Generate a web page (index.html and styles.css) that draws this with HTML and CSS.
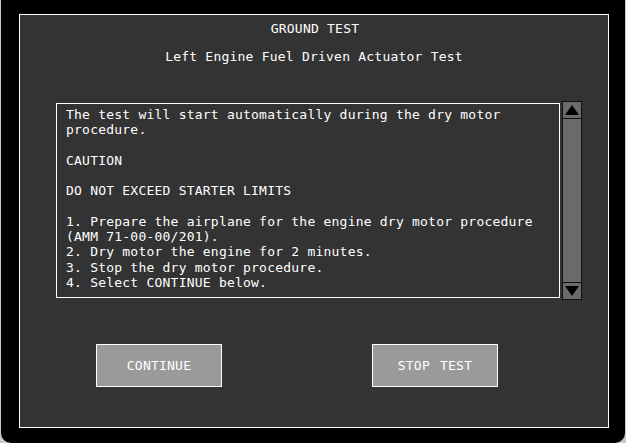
FILE: index.html
```html
<!DOCTYPE html>
<html>
<head>
<meta charset="utf-8">
<link rel="stylesheet" href="styles.css">
</head>
<body>
<div class="frame">
  <div class="panel">
    <div class="title">GROUND TEST</div>
    <div class="subtitle">Left Engine Fuel Driven Actuator Test</div>
    <div class="content-row">
      <div class="textbox">
        <div class="line">The test will start automatically during the dry motor</div>
        <div class="line">procedure.</div>
        <div class="line"></div>
        <div class="line">CAUTION</div>
        <div class="line"></div>
        <div class="line">DO NOT EXCEED STARTER LIMITS</div>
        <div class="line"></div>
        <div class="line">1. Prepare the airplane for the engine dry motor procedure</div>
        <div class="line">(AMM 71-00-00/201).</div>
        <div class="line">2. Dry motor the engine for 2 minutes.</div>
        <div class="line">3. Stop the dry motor procedure.</div>
        <div class="line">4. Select CONTINUE below.</div>
      </div>
      <div class="scrollbar">
        <div class="sb-btn">
          <svg width="14" height="10" viewBox="0 0 14 10"><polygon points="7,0 14,10 0,10" fill="#000"/></svg>
        </div>
        <div class="sb-track"></div>
        <div class="sb-btn">
          <svg width="14" height="10" viewBox="0 0 14 10"><polygon points="0,0 14,0 7,10" fill="#000"/></svg>
        </div>
      </div>
    </div>
    <div class="button-row">
      <div class="btn">CONTINUE</div>
      <div class="btn">STOP TEST</div>
    </div>
  </div>
</div>
</body>
</html>
```

FILE: styles.css
```css
html, body {
  margin: 0;
  padding: 0;
}
body {
  background: #c8c8c8;
  width: 626px;
  height: 443px;
  overflow: hidden;
  font-family: "DejaVu Sans Mono", "Liberation Mono", monospace;
  font-size: 13px;
  letter-spacing: 0.22px;
  color: #fff;
}
.frame {
  margin: 0 1px;
  width: 624px;
  height: 443px;
  box-sizing: border-box;
  background: #000;
  border-radius: 0 0 10px 10px;
  padding: 14px 16px 15px 18px;
}
.panel {
  box-sizing: border-box;
  width: 590px;
  height: 414px;
  border: 1px solid #fff;
  background: #333333;
  display: flex;
  flex-direction: column;
  padding-top: 6px;
}
.title, .subtitle {
  text-align: center;
  line-height: 16px;
  height: 16px;
}
.title {
  padding-left: 2px;
}
.subtitle {
  margin-top: 12px;
}
.content-row {
  display: flex;
  align-items: flex-start;
  margin-top: 36px;
  padding-left: 36px;
  gap: 2px;
}
.textbox {
  box-sizing: border-box;
  width: 504px;
  height: 195px;
  margin-top: 2px;
  border: 1px solid #fff;
  padding: 3px 9px 2px;
  line-height: 15.27px;
}
.line {
  height: 15.27px;
  white-space: nowrap;
}
.scrollbar {
  box-sizing: border-box;
  width: 20px;
  height: 199px;
  background: #111;
  padding: 1px;
  display: flex;
  flex-direction: column;
  gap: 1px;
}
.sb-btn {
  height: 16px;
  background: #6b6b6b;
  display: flex;
  align-items: center;
  justify-content: center;
}
.sb-track {
  flex: 1;
  background: #6b6b6b;
}
.button-row {
  display: flex;
  margin-top: 44px;
  padding-left: 76px;
  gap: 150px;
}
.btn {
  box-sizing: border-box;
  width: 126px;
  height: 43px;
  border: 1px solid #fff;
  background: #9a9a9a;
  display: flex;
  align-items: center;
  justify-content: center;
  word-spacing: 2px;
}
```
